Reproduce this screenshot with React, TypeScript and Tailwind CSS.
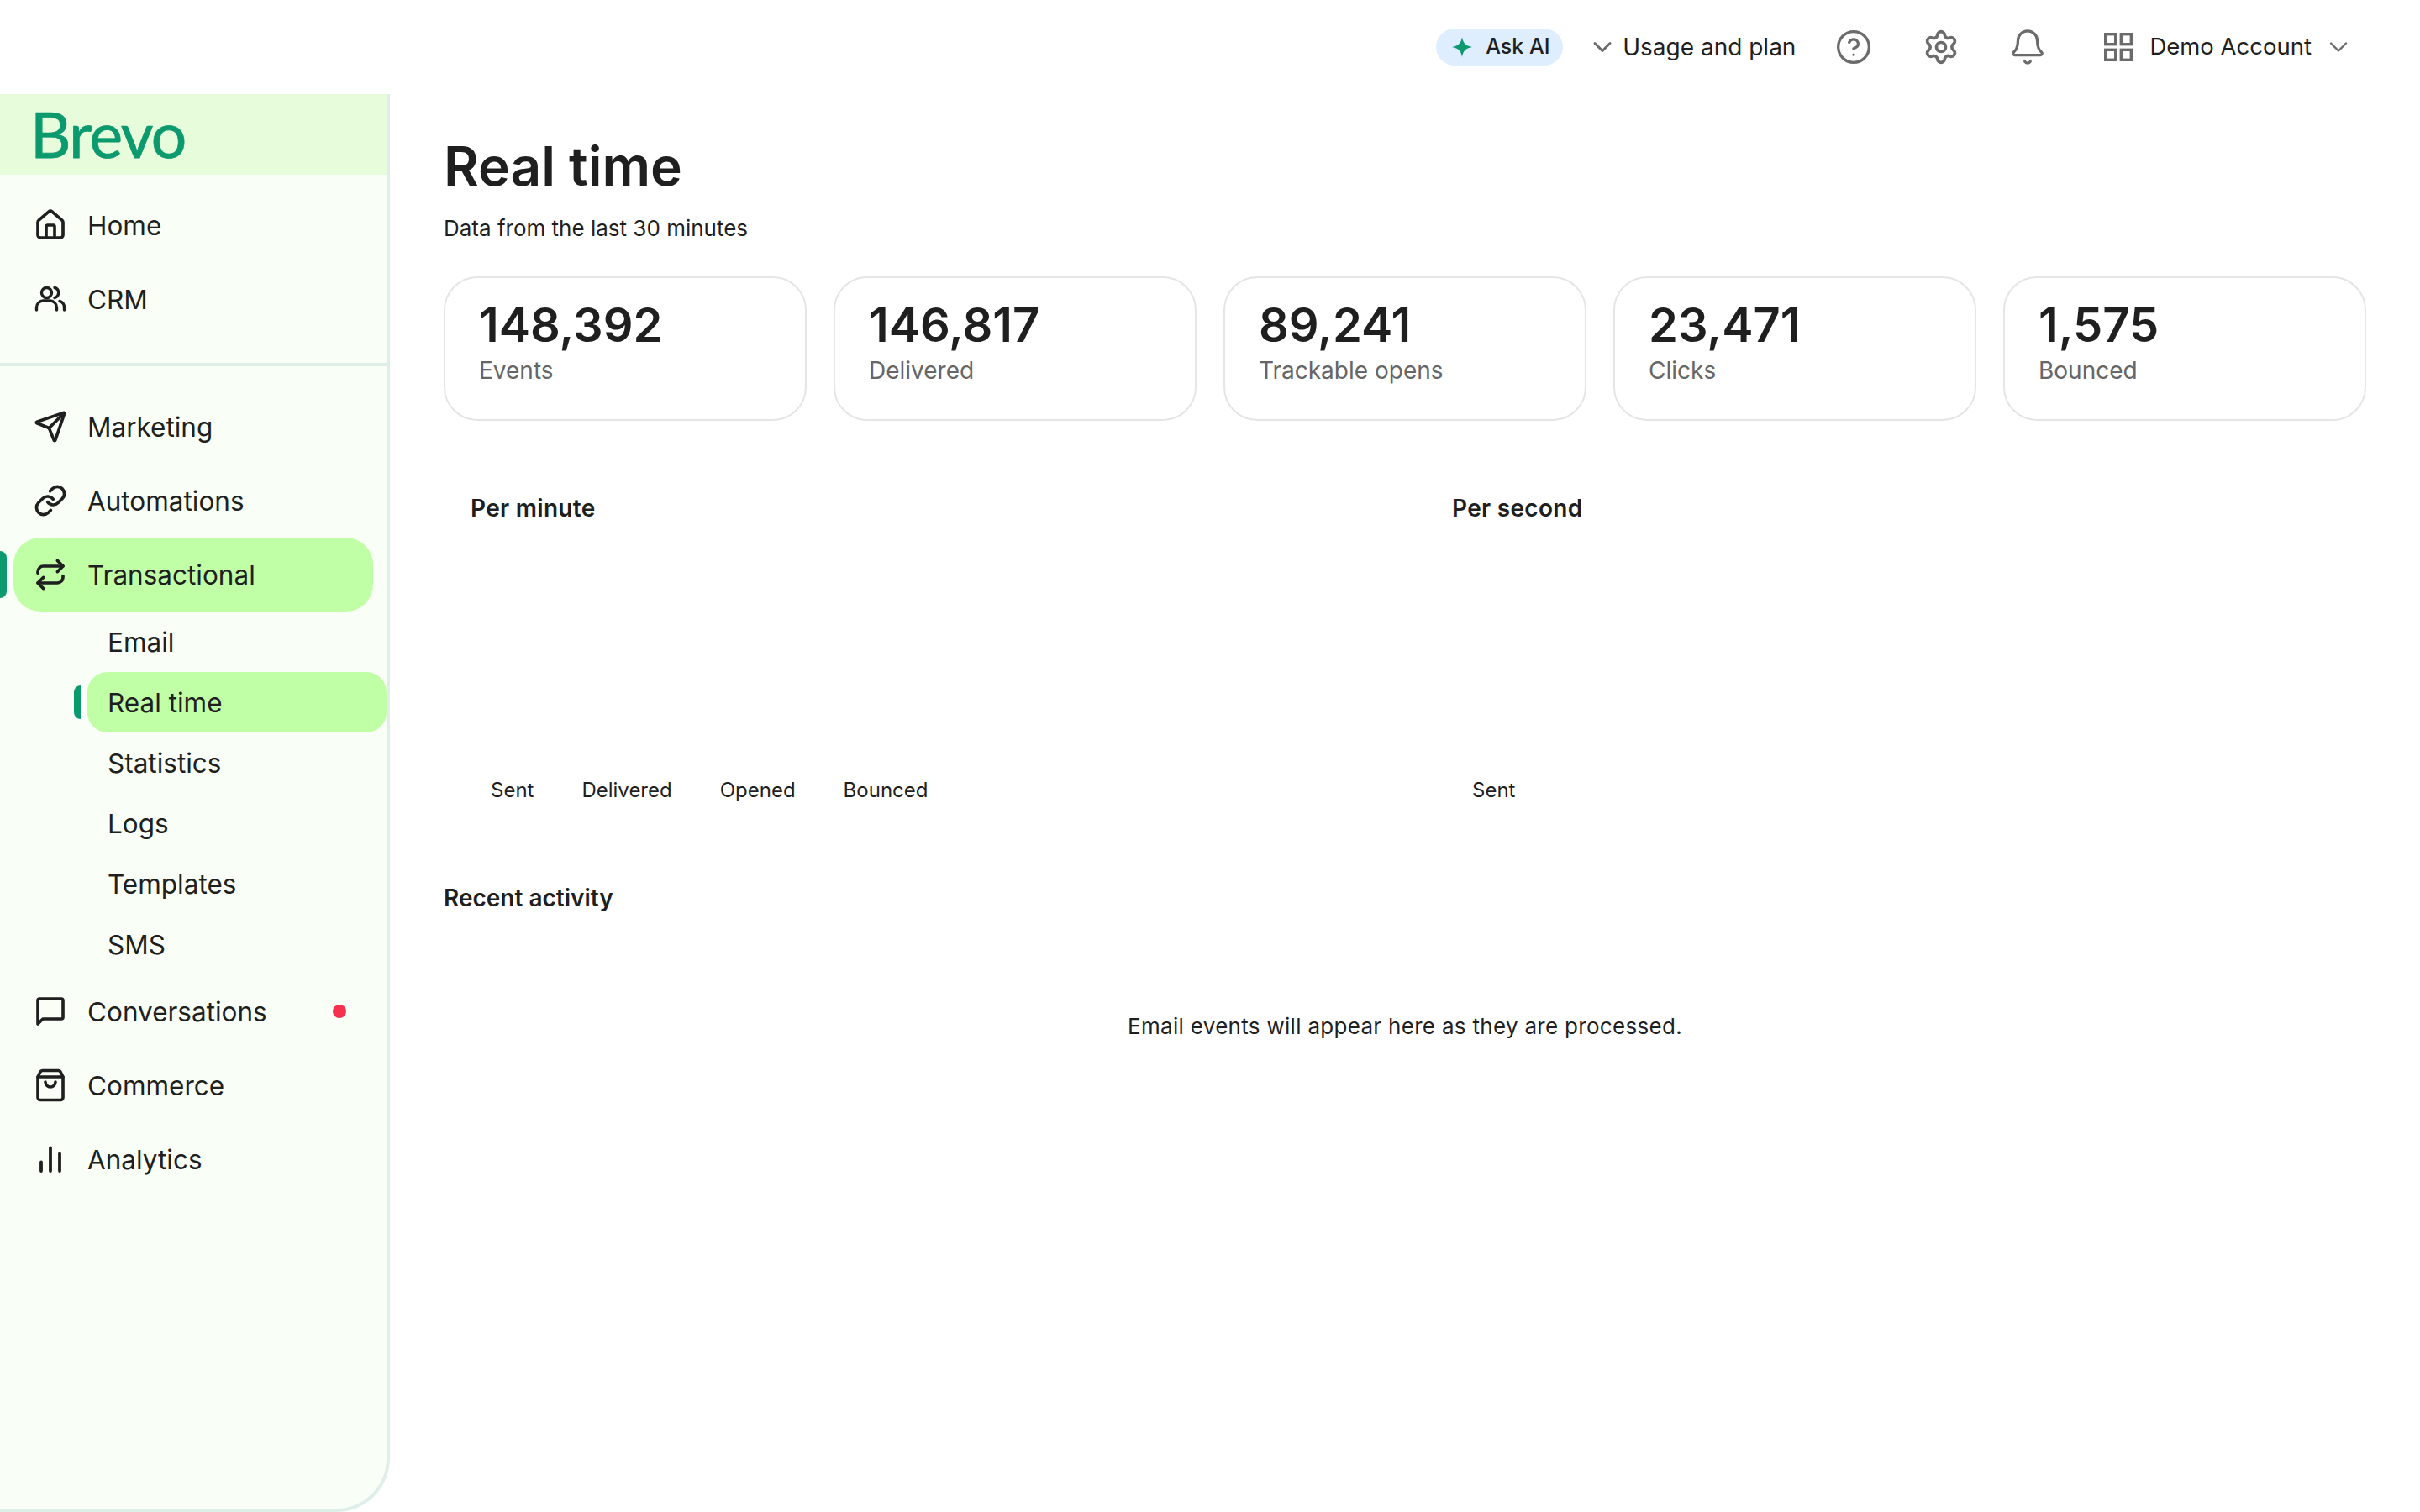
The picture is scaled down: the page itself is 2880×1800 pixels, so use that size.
import { Bell, ChevronDown, CircleHelp, House, Link, Repeat, Send, Settings } from 'lucide-react';
import type { ReactNode } from 'react';

const stats = [
  { value: '148,392', label: 'Events' },
  { value: '146,817', label: 'Delivered' },
  { value: '89,241', label: 'Trackable opens' },
  { value: '23,471', label: 'Clicks' },
  { value: '1,575', label: 'Bounced' },
];

const subItems = ['Email', 'Real time', 'Statistics', 'Logs', 'Templates', 'SMS'];

function UsersIcon() {
  return (
    <svg width="40" height="40" viewBox="0 0 40 40" fill="none" stroke="#1f1f1f" strokeWidth="3.4" strokeLinecap="round">
      <circle cx="15.500" cy="12.500" r="6" />
      <path d="M25 6.500a6.200 6.200 0 0 1 0 12" />
      <path d="M3.500 33v-3a8 8 0 0 1 8-8h8a8 8 0 0 1 8 8v3" />
      <path d="M31 22.500a7.500 7.500 0 0 1 5.500 7.500v3" />
    </svg>
  );
}

function ChatIcon() {
  return (
    <svg width="40" height="40" viewBox="0 0 40 40" fill="none" stroke="#1f1f1f" strokeWidth="3.6" strokeLinejoin="round">
      <path d="M5 7a2 2 0 0 1 2-2h26a2 2 0 0 1 2 2v20a2 2 0 0 1-2 2H11l-6 6z" />
    </svg>
  );
}

function BagIcon() {
  return (
    <svg width="40" height="40" viewBox="0 0 40 40" fill="none" stroke="#1f1f1f" strokeWidth="3.6" strokeLinecap="round" strokeLinejoin="round">
      <path d="M5 10l3-6a3 3 0 0 1 2.500-1.500h19a3 3 0 0 1 2.500 1.500l3 6v24.500a3 3 0 0 1-3 3H8a3 3 0 0 1-3-3z" />
      <path d="M5 10h30" />
      <path d="M14 16a6 6 0 0 0 12 0" />
    </svg>
  );
}

function BarsIcon() {
  return (
    <svg width="40" height="40" viewBox="0 0 40 40" fill="none" stroke="#1f1f1f" strokeWidth="3.8" strokeLinecap="round">
      <path d="M9 34V23.500" />
      <path d="M20 34V6.500" />
      <path d="M31 34V13.500" />
    </svg>
  );
}

function SparkleIcon() {
  return (
    <svg width="24" height="24" viewBox="0 0 24 24" fill="#0b996e">
      <path d="M12 0c1 7 4 10.500 12 12-8 1.500-11 5-12 12-1-7-4-10.500-12-12 8-1.500 11-5 12-12z" />
    </svg>
  );
}

function GridIcon() {
  return (
    <svg width="34" height="34" viewBox="0 0 34 34" fill="none" stroke="#6b6b6b" strokeWidth="3.4">
      <rect x="1.700" y="1.700" width="12" height="12" />
      <rect x="20.300" y="1.700" width="12" height="12" />
      <rect x="1.700" y="20.300" width="12" height="12" />
      <rect x="20.300" y="20.300" width="12" height="12" />
    </svg>
  );
}

function NavRow({ icon, label, active, dot }: { icon: ReactNode; label: string; active?: boolean; dot?: boolean }) {
  return (
    <div className="flex items-center">
      <span className={`w-[8px] h-[56px] rounded-r-[8px] ${active ? 'bg-[#0b996e]' : ''}`} />
      <div className={`ml-[8px] w-[428px] h-[88px] flex items-center pl-[24px] rounded-[32px] ${active ? 'bg-[#c1ffa6]' : ''}`}>
        <span className="w-[40px] h-[40px] flex items-center justify-center">{icon}</span>
        <span className="ml-[24px] pt-[2px] text-[31.5px] text-[#1f1f1f]">{label}</span>
        {dot && <span className="ml-auto mr-[32px] w-[16px] h-[16px] rounded-full bg-[#f5314f]" />}
      </div>
    </div>
  );
}

function SubRow({ label, active }: { label: string; active?: boolean }) {
  return (
    <div className="flex items-center pl-[88px]">
      <span className={`w-[8px] h-[40px] rounded-l-[8px] ${active ? 'bg-[#0b996e]' : ''}`} />
      <div className={`ml-[8px] w-[356px] h-[72px] flex items-center pl-[24px] pt-[2px] rounded-[24px] text-[31.5px] text-[#1f1f1f] ${active ? 'bg-[#c1ffa6]' : ''}`}>
        {label}
      </div>
    </div>
  );
}

function Sidebar() {
  const iconProps = { size: 40, color: '#1f1f1f', strokeWidth: 2.2 };
  return (
    <aside className="w-[464px] shrink-0 bg-[#f9fff6] border-r-4 border-b-4 border-[#deefe9] rounded-br-[64px]">
      <div className="h-[96px] bg-[#e7fcdb] pl-[36px] pb-[2px] flex items-center">
        <span className="font-['Lato',sans-serif] text-[75px] leading-none text-[#0b996e] tracking-[-1.5px] [-webkit-text-stroke:0.75px_#0b996e]">Brevo</span>
      </div>
      <div className="pt-[16px] pb-[32px] border-b-4 border-[#deefe9]">
        <NavRow icon={<House {...iconProps} />} label="Home" />
        <NavRow icon={<UsersIcon />} label="CRM" />
      </div>
      <div className="pt-[28px]">
        <NavRow icon={<Send {...iconProps} />} label="Marketing" />
        <NavRow icon={<Link {...iconProps} />} label="Automations" />
        <NavRow icon={<Repeat {...iconProps} />} label="Transactional" active />
        {subItems.map((item) => (
          <SubRow key={item} label={item} active={item === 'Real time'} />
        ))}
        <NavRow icon={<ChatIcon />} label="Conversations" dot />
        <NavRow icon={<BagIcon />} label="Commerce" />
        <NavRow icon={<BarsIcon />} label="Analytics" />
      </div>
    </aside>
  );
}

function TopBar() {
  return (
    <header className="h-[112px] shrink-0 flex items-center justify-end pr-[79px] text-[#1f1f1f]">
      <div className="w-[151px] h-[44px] rounded-full bg-[#deeefe] flex items-center pl-[19px]">
        <SparkleIcon />
        <span className="ml-[16px] text-[25px] font-medium">Ask AI</span>
      </div>
      <ChevronDown className="ml-[29px]" size={36} color="#6b6b6b" strokeWidth={2} />
      <span className="ml-[6px] text-[28px]">Usage and plan</span>
      <CircleHelp className="ml-[47px]" size={44} color="#6b6b6b" strokeWidth={1.8} />
      <Settings className="ml-[60px]" size={44} color="#6b6b6b" strokeWidth={2} />
      <Bell className="ml-[58px]" size={46} color="#6b6b6b" strokeWidth={1.7} />
      <span className="ml-[68px]">
        <GridIcon />
      </span>
      <span className="ml-[20px] text-[27.5px]">Demo Account</span>
      <ChevronDown className="ml-[14px]" size={36} color="#6b6b6b" strokeWidth={1.6} />
    </header>
  );
}

function StatCard({ value, label }: { value: string; label: string }) {
  return (
    <div className="h-[172px] border-2 border-[#e5e5e5] rounded-[40px] pl-[40px] pt-[22px]">
      <div className="text-[56px] leading-[68px] font-semibold text-[#1f1f1f]">{value}</div>
      <div className="text-[28px] leading-[40px] text-[#666666]">{label}</div>
    </div>
  );
}

function RateChart({ title, legend }: { title: string; legend: string[] }) {
  return (
    <section className="pl-[32px]">
      <h2 className="text-[28px] leading-[40px] font-semibold tracking-[0.3px] text-[#1f1f1f]">{title}</h2>
      <div className="h-[300px]" />
      <div className="flex gap-[57px] pl-[24px] text-[24px] leading-[32px] text-[#1f1f1f]">
        {legend.map((item) => (
          <span key={item}>{item}</span>
        ))}
      </div>
    </section>
  );
}

export default function App() {
  return (
    <div className="w-[2880px] h-[1800px] flex flex-col bg-white font-['Inter',sans-serif] overflow-hidden">
      <TopBar />
      <div className="flex flex-1 min-h-0">
        <Sidebar />
        <main className="flex-1 pl-[64px] pr-[64px]">
          <h1 className="mt-[50px] text-[64px] leading-[72px] font-semibold text-[#1f1f1f]">Real time</h1>
          <p className="mt-[18px] text-[26px] leading-[40px] text-[#1f1f1f]">Data from the last 30 minutes</p>
          <div className="mt-[37px] grid grid-cols-5 gap-[32px]">
            {stats.map((stat) => (
              <StatCard key={stat.label} value={stat.value} label={stat.label} />
            ))}
          </div>
          <div className="mt-[84px] grid grid-cols-2 gap-[48px]">
            <RateChart title="Per minute" legend={['Sent', 'Delivered', 'Opened', 'Bounced']} />
            <RateChart title="Per second" legend={['Sent']} />
          </div>
          <h2 className="mt-[92px] text-[28px] leading-[40px] font-semibold text-[#1f1f1f]">Recent activity</h2>
          <p className="mt-[113px] text-center text-[26px] tracking-[0.3px] leading-[40px] text-[#1f1f1f]">
            Email events will appear here as they are processed.
          </p>
        </main>
      </div>
    </div>
  );
}
